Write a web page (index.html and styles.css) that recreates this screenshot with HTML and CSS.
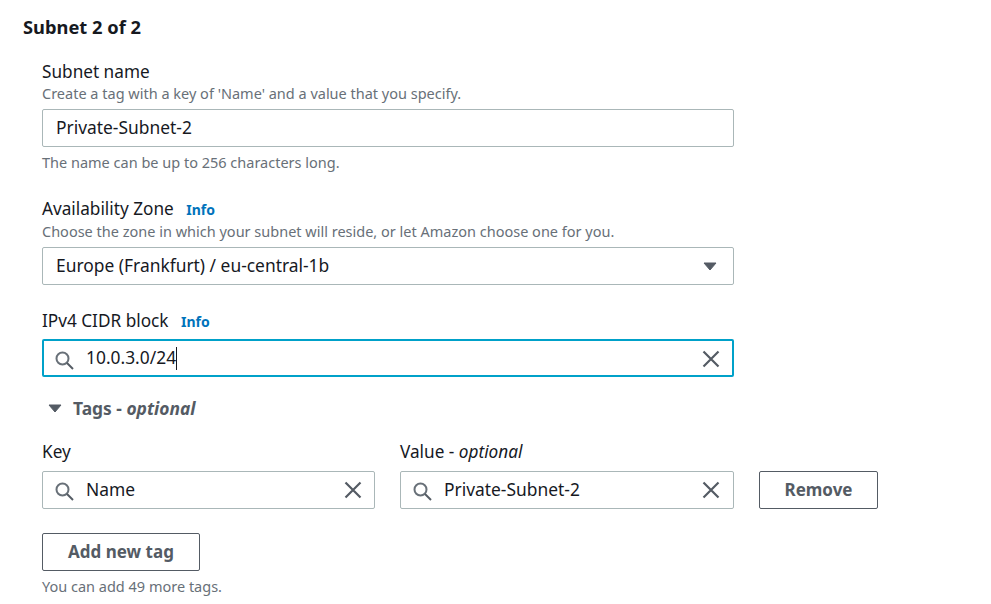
FILE: index.html
```html
<!DOCTYPE html>
<html lang="en">
  <head>
    <meta charset="UTF-8" />
    <title>Subnet settings</title>
    <link rel="stylesheet" href="styles.css">
  </head>
  <body>
    <div class="container">
      <h2 class="title">Subnet 2 of 2</h2>

      <div class="form">
        <div class="field field-name">
          <div class="label">Subnet name</div>
          <div class="desc">Create a tag with a key of 'Name' and a value that you specify.</div>
          <div class="box"><span class="val val-plain">Private-Subnet-2</span></div>
          <div class="hint">The name can be up to 256 characters long.</div>
        </div>

        <div class="field field-zone">
          <div class="label">Availability Zone <a class="info">Info</a></div>
          <div class="desc">Choose the zone in which your subnet will reside, or let Amazon choose one for you.</div>
          <div class="box">
            <span class="val val-plain">Europe (Frankfurt) / eu-central-1b</span>
            <svg class="caret-icon" width="16" height="16" viewBox="0 0 16 16"><path d="M2 5h12L8 12z" fill="#545b64" stroke="#545b64" stroke-linejoin="round"/></svg>
          </div>
        </div>

        <div class="field field-cidr">
          <div class="label">IPv4 CIDR block <a class="info">Info</a></div>
          <div class="box box-focus">
            <svg class="search" width="20" height="20" viewBox="0 0 20 20"><circle cx="8.5" cy="8.5" r="6" fill="none" stroke="#687078" stroke-width="2"/><path d="M13 13l6 6" stroke="#545b64" stroke-width="2"/></svg>
            <span class="val">10.0.3.0/24</span><span class="cursor"></span>
            <svg class="clear" width="20" height="20" viewBox="0 0 20 20"><path d="M2.5 2.5l15 15M17.500 2.500l-15 15" stroke="#545b64" stroke-width="2.200"/></svg>
          </div>
        </div>

        <div class="tags-head">
          <svg width="16" height="16" viewBox="0 0 16 16"><path d="M2 5h12L8 12z" fill="#545b64" stroke="#545b64" stroke-linejoin="round"/></svg>
          <span>Tags - <i>optional</i></span>
        </div>

        <div class="tag-row">
          <div class="tag-col">
            <div class="label">Key</div>
            <div class="box">
              <svg class="search" width="20" height="20" viewBox="0 0 20 20"><circle cx="8.5" cy="8.5" r="6" fill="none" stroke="#687078" stroke-width="2"/><path d="M13 13l6 6" stroke="#545b64" stroke-width="2"/></svg>
              <span class="val">Name</span>
              <svg class="clear" width="20" height="20" viewBox="0 0 20 20"><path d="M2.5 2.5l15 15M17.500 2.500l-15 15" stroke="#545b64" stroke-width="2.200"/></svg>
            </div>
          </div>
          <div class="tag-col tag-col-value">
            <div class="label">Value - <i>optional</i></div>
            <div class="box">
              <svg class="search" width="20" height="20" viewBox="0 0 20 20"><circle cx="8.5" cy="8.5" r="6" fill="none" stroke="#687078" stroke-width="2"/><path d="M13 13l6 6" stroke="#545b64" stroke-width="2"/></svg>
              <span class="val">Private-Subnet-2</span>
              <svg class="clear" width="20" height="20" viewBox="0 0 20 20"><path d="M2.5 2.5l15 15M17.500 2.500l-15 15" stroke="#545b64" stroke-width="2.200"/></svg>
            </div>
          </div>
          <button class="btn btn-remove">Remove</button>
        </div>

        <button class="btn btn-add">Add new tag</button>
        <div class="hint hint-last">You can add 49 more tags.</div>
      </div>
    </div>
  </body>
</html>
```

FILE: styles.css
```css
body {
  margin: 0;
  background: #fff;
  font-family: "Noto Sans", "Open Sans", sans-serif;
  color: #16191f;
  overflow: hidden;
}
.container {
  padding: 16px 0 0 23px;
  height: 588px;
}
.title {
  margin: 0;
  font-size: 18.3px;
  line-height: 22px;
  font-weight: 700;
}
.form {
  width: 692px;
  margin: 23px 0 0 19px;
}
.label {
  font-size: 17.2px;
  line-height: 22px;
}
.desc {
  font-size: 14.5px;
  line-height: 20px;
  color: #687078;
}
.hint {
  font-size: 14.5px;
  line-height: 20px;
  color: #687078;
  margin-top: 5px;
}
.info {
  font-size: 14px;
  font-weight: 700;
  color: #0073bb;
  margin-left: 8px;
}
.box {
  box-sizing: border-box;
  height: 38px;
  display: flex;
  align-items: center;
  padding: 0 11px 0 12px;
  border: 1px solid #aab7b8;
  border-radius: 2px;
  background: #fff;
}
.val {
  font-size: 17.4px;
  line-height: 22px;
  margin-bottom: 2px;
}
.val-plain {
  margin-left: 1px;
}
.field-name .box {
  margin-top: 6px;
}
.field-zone {
  margin-top: 26px;
}
.field-zone .box {
  margin-top: 6px;
}
.caret-icon {
  margin-left: auto;
  margin-right: 4px;
}
.field-cidr {
  margin-top: 25px;
}
.field-cidr .box {
  margin-top: 6px;
}
.box-focus {
  border: 2px solid #00a1c9;
  padding: 0 11px 0 11px;
}
.search {
  margin: 2px 12px 0 -1px;
  flex: none;
}
.box-focus .search {
  margin-top: 4px;
}
.clear {
  margin-left: auto;
  flex: none;
}
.box-focus .clear {
  margin-top: 2px;
}
.cursor {
  width: 1px;
  height: 23px;
  background: #16191f;
}
.tags-head {
  display: flex;
  align-items: center;
  gap: 10px;
  margin: 20px 0 0 5px;
  font-size: 17.4px;
  line-height: 22px;
  font-weight: 700;
  color: #545b64;
}
.tag-row {
  display: flex;
  align-items: flex-end;
  margin-top: 22px;
}
.tag-col {
  width: 333px;
}
.tag-col-value {
  width: 334px;
  margin-left: 25px;
}
.tag-col-value .box {
  padding-right: 12px;
}
.tag-col .box {
  margin-top: 8px;
}
.btn {
  box-sizing: border-box;
  height: 38px;
  background: #fff;
  border: 1px solid #545b64;
  border-radius: 2px;
  font-family: inherit;
  font-size: 17px;
  font-weight: 700;
  color: #545b64;
  padding: 0 0 2px;
}
.btn-remove {
  width: 119px;
  flex: none;
  margin-left: 25px;
  margin-right: -145px;
}
.btn-add {
  display: block;
  width: 158px;
  margin-top: 24px;
}
```
